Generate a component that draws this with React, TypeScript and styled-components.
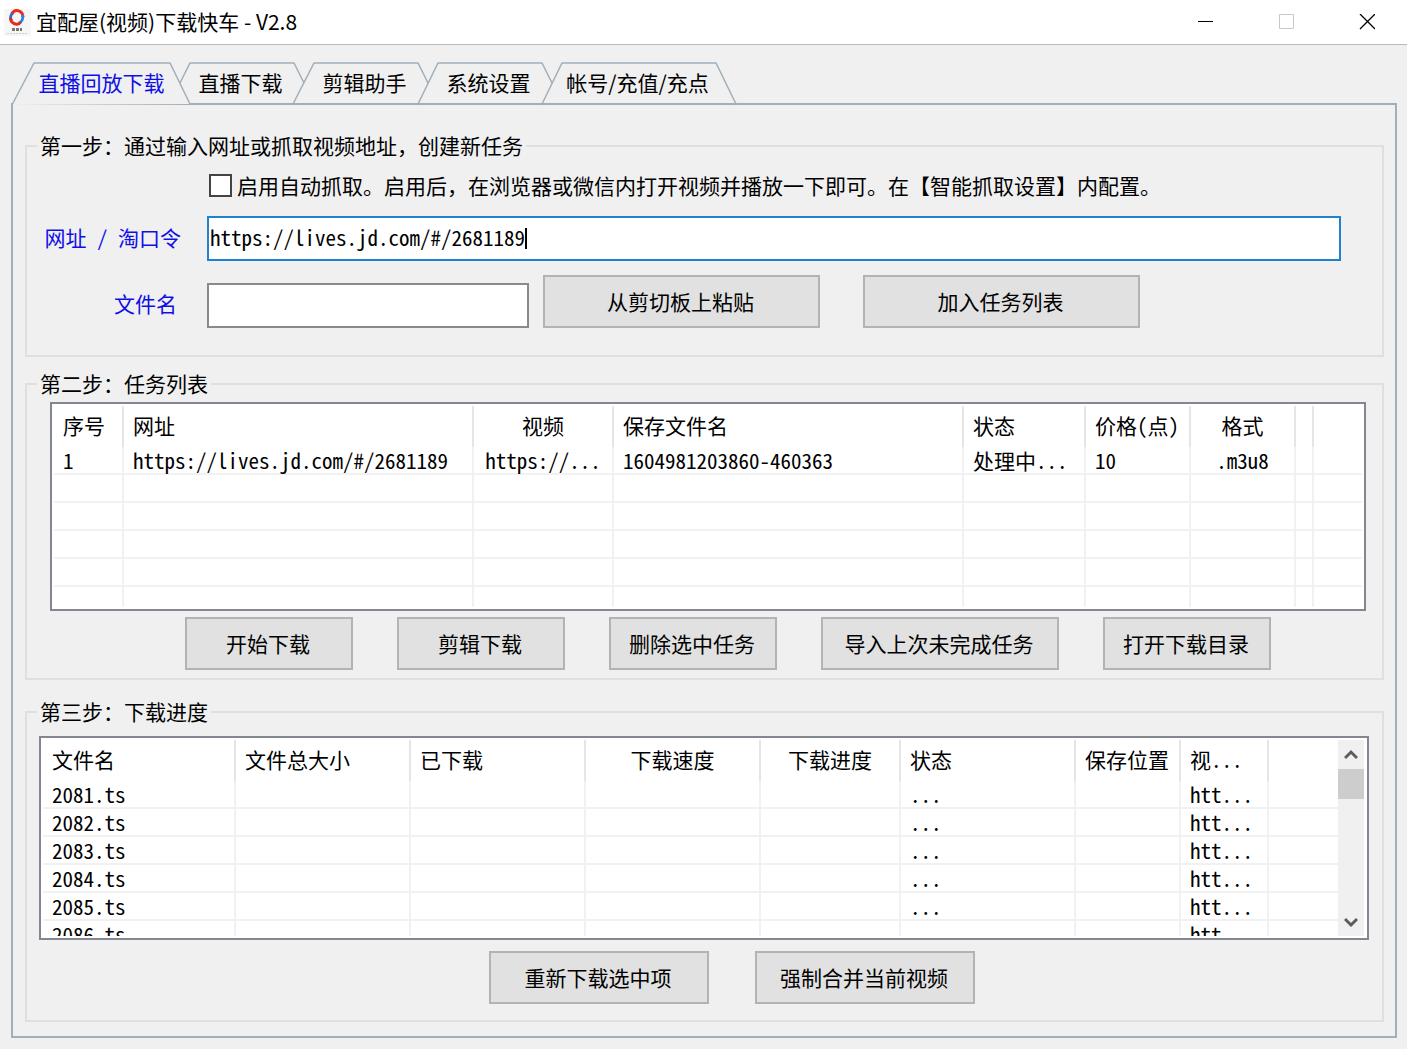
import React from "react";
import styled, { createGlobalStyle, css } from "styled-components";

const colors = {
  face: "#f0f0f0",
  panelLine: "#a0afb9",
  groupLine: "#dfdfdf",
  listLine: "#828790",
  grid: "#f1f1f1",
  headerLine: "#e5e5e5",
  blue: "#0f0fe6",
  focus: "#1f82cf",
};

const cellFont = `"Noto Sans Mono CJK SC", "Noto Sans CJK SC", "Liberation Mono", monospace`;
const uiFont = `"Noto Sans CJK SC", "Open Sans", sans-serif`;

const GlobalStyle = createGlobalStyle`
  *, *::before, *::after { box-sizing: border-box; }
  body {
    margin: 0;
    background: ${colors.face};
    color: #000;
    font: 21px/28px ${cellFont};
  }
  button, input { font: inherit; color: inherit; }
`;

const Window = styled.div`
  display: flex;
  flex-direction: column;
  min-width: 1200px;
`;

const TitleBar = styled.header`
  display: flex;
  align-items: center;
  height: 45px;
  padding-left: 4px;
  background: #fff;
  border-bottom: 1px solid #b9b9b9;
`;

const Title = styled.h1`
  flex: 1;
  margin: 0;
  padding: 0 0 3px 5px;
  font: 400 21px/28px ${uiFont};
`;

const CaptionButton = styled.button`
  display: flex;
  align-items: center;
  justify-content: center;
  width: 81px;
  height: 44px;
  padding: 0;
  border: 0;
  background: none;
`;

const Tabs = styled.nav`
  position: relative;
  display: flex;
  height: 43px;
  margin: 17px 0 -2px 11px;
`;

const Tab = styled.button<{ $width: number; $active?: boolean }>`
  position: relative;
  width: ${(p) => p.$width}px;
  padding: 0 ${(p) => (p.$active ? 0 : 3)}px 3px ${(p) => (p.$active ? 12 : 0)}px;
  border: 0;
  background: none;
  color: ${(p) => (p.$active ? colors.blue : "#000")};
  font: 400 21px/28px ${uiFont};
  white-space: nowrap;
`;

const TabShape = styled.svg`
  position: absolute;
  top: 0;
  left: 0;
  overflow: visible;
  pointer-events: none;
`;

const TabLabel = styled.span`
  position: relative;
`;

const Panel = styled.main`
  display: flex;
  flex-direction: column;
  margin: 0 10px 11px 11px;
  padding: 26px 11px 14px 12px;
  border: 2px solid ${colors.panelLine};
`;

const Group = styled.fieldset<{ $gap?: number }>`
  min-width: 0;
  margin: ${(p) => p.$gap ?? 0}px 0 0;
  padding: 0;
  border: 2px solid ${colors.groupLine};
`;

const Legend = styled.legend`
  height: 30px;
  margin-left: 10px;
  padding: 0 3px;
  line-height: 28px;
`;

const GroupBody = styled.div<{ $padding: string; $gap: number }>`
  display: flex;
  flex-direction: column;
  gap: ${(p) => p.$gap}px;
  padding: ${(p) => p.$padding};
`;

const FormGrid = styled.div`
  display: grid;
  grid-template-columns: 154px 1fr;
  column-gap: 26px;
  row-gap: 14px;
  padding: 9px 41px 27px 0;
`;

const FieldLabel = styled.label<{ $low?: boolean }>`
  align-self: center;
  padding: ${(p) => (p.$low ? "3px 4px 0 0" : "0 0 4px")};
  text-align: right;
  color: ${colors.blue};
`;

const CheckLine = styled.label`
  grid-column: 2;
  display: flex;
  align-items: center;
  gap: 5px;
  height: 32px;
  padding-left: 2px;
  white-space: nowrap;
`;

const CheckText = styled.span`
  padding-bottom: 3px;
`;

const Checkbox = styled.input`
  appearance: none;
  width: 23px;
  height: 23px;
  margin: 0 0 1px;
  border: 2px solid #444;
  background: #fff;
`;

const UrlBox = styled.div`
  position: relative;
`;

const textBox = css`
  display: block;
  height: 45px;
  padding: 0 1px 4px;
  border-radius: 0;
  background: #fff;
  outline: 0;
`;

const UrlInput = styled.input`
  ${textBox}
  width: 100%;
  border: 2px solid ${colors.focus};
`;

const NameInput = styled.input`
  ${textBox}
  width: 322px;
  margin-right: 14px;
  border: 2px solid #8a8a8a;
`;

const Caret = styled.i`
  position: absolute;
  top: 12px;
  left: 318px;
  width: 2px;
  height: 21px;
  background: #000;
`;

const FileRow = styled.div`
  display: flex;
  align-items: flex-end;
`;

const ButtonRow = styled.div<{ $shift: number; $gap: number }>`
  display: flex;
  justify-content: center;
  gap: ${(p) => p.$gap}px;
  padding-left: ${(p) => p.$shift}px;
`;

const PushButton = styled.button<{ $width: number }>`
  width: ${(p) => p.$width}px;
  height: 53px;
  padding: 0 2px 2px 0;
  border: 2px solid #b3b3b3;
  background: #e1e1e1;
  white-space: nowrap;
`;

const PasteButton = styled(PushButton)`
  margin-right: 43px;
`;

const ListFrame = styled.div<{ $height: number }>`
  display: flex;
  height: ${(p) => p.$height}px;
  padding: 2px;
  border: 2px solid ${colors.listLine};
  background: #fff;
`;

const Viewport = styled.div`
  flex: 1;
  min-width: 0;
  overflow: hidden;
`;

const Table = styled.table`
  width: 100%;
  table-layout: fixed;
  border-collapse: separate;
  border-spacing: 0;
`;

const cell = css<{ $center?: boolean }>`
  padding: 0 0 0 ${(p) => (p.$center ? 0 : 9)}px;
  border-right: 2px solid ${colors.grid};
  text-align: ${(p) => (p.$center ? "center" : "left")};
  font-weight: 400;
  white-space: nowrap;
  &:last-child { border-right: 0; }
`;

const HeadCell = styled.th<{ $center?: boolean }>`
  ${cell}
  height: 41px;
  padding-bottom: 4px;
  border-right-color: ${colors.headerLine};
`;

const Cell = styled.td<{ $center?: boolean }>`
  ${cell}
  height: 28px;
  border-bottom: 2px solid ${colors.grid};
  line-height: 26px;
`;

const ScrollBar = styled.div`
  display: flex;
  flex-direction: column;
  width: 27px;
  padding-right: 1px;
  background: #f0f0f0;
  background-clip: content-box;
`;

const ScrollArrow = styled.button`
  display: flex;
  align-items: center;
  justify-content: center;
  height: 29px;
  padding: 0;
  border: 0;
  background: none;
`;

const ScrollTrack = styled.div`
  flex: 1;
`;

const ScrollThumb = styled.div`
  height: 30px;
  background: #cdcdcd;
`;

type Column = { title: string; width?: number; center?: boolean };

const taskColumns: Column[] = [
  { title: "序号", width: 70 },
  { title: "网址", width: 350 },
  { title: "视频", width: 140, center: true },
  { title: "保存文件名", width: 350 },
  { title: "状态", width: 122 },
  { title: "价格(点)", width: 105 },
  { title: "格式", width: 105, center: true },
  { title: "", width: 18 },
  { title: "" },
];

const emptyTask = taskColumns.map(() => "");
const taskRows = [
  ["1", "https://lives.jd.com/#/2681189", "https://...", "1604981203860-460363", "处理中...", "10", ".m3u8", "", ""],
  emptyTask,
  emptyTask,
  emptyTask,
  emptyTask,
  emptyTask,
];

const progressColumns: Column[] = [
  { title: "文件名", width: 193 },
  { title: "文件总大小", width: 175 },
  { title: "已下载", width: 175 },
  { title: "下载速度", width: 175, center: true },
  { title: "下载进度", width: 140, center: true },
  { title: "状态", width: 175 },
  { title: "保存位置", width: 105 },
  { title: "视...", width: 88 },
  { title: "" },
];

const progressRows = [2081, 2082, 2083, 2084, 2085, 2086].map((n) => [
  `${n}.ts`, "", "", "", "", "...", "", "htt...", "",
]);

function ListTable({ columns, rows }: { columns: Column[]; rows: string[][] }) {
  return (
    <Viewport>
      <Table>
        <colgroup>
          {columns.map((c, i) => (
            <col key={i} width={c.width} />
          ))}
        </colgroup>
        <thead>
          <tr>
            {columns.map((c, i) => (
              <HeadCell key={i} $center={c.center}>{c.title}</HeadCell>
            ))}
          </tr>
        </thead>
        <tbody>
          {rows.map((row, r) => (
            <tr key={r}>
              {row.map((value, i) => (
                <Cell key={i} $center={columns[i].center}>{value}</Cell>
              ))}
            </tr>
          ))}
        </tbody>
      </Table>
    </Viewport>
  );
}

const tabs = [
  { label: "直播回放下载", width: 169, path: "M1 43L23 1H159L179 42" },
  { label: "直播下载", width: 124, path: "M0 21L10 1H114L124 21" },
  { label: "剪辑助手", width: 124, path: "M-11 42L10 1H114L124 21" },
  { label: "系统设置", width: 124, path: "M-10 42L10 1H114L124 21" },
  { label: "帐号/充值/充点", width: 174, path: "M-10 42L10 1H164L184 42" },
];

function AppLogo() {
  return (
    <svg width="27" height="27" viewBox="0 0 27 27" aria-hidden="true">
      <rect width="27" height="27" fill="#f6f6f6" />
      <g fill="none" strokeWidth="3">
        <path d="M7.500 12A6 6.500 0 0 1 9 3.500" stroke="#2f6fd0" />
        <path d="M8 4.500A6 6.500 0 0 1 19 8" stroke="#ee2b1c" />
        <path d="M18.500 6A6 6.500 0 0 1 15 14" stroke="#2a83dc" />
        <path d="M16.500 13.500A6 6.500 0 0 1 6.500 9" stroke="#e8281c" />
      </g>
      <path d="M8 20.500h10" stroke="#777" strokeWidth="3" strokeDasharray="3 1" />
      <path d="M3 24.500h21" stroke="#cfcfcf" strokeDasharray="2 1" />
    </svg>
  );
}

function Chevron({ down }: { down?: boolean }) {
  return (
    <svg width="14" height="12" viewBox="0 0 14 12" aria-hidden="true">
      <path d={down ? "M1 3L7 9L13 3" : "M1 9L7 3L13 9"} fill="none" stroke="#5c5c5c" strokeWidth="3" />
    </svg>
  );
}

export default function App() {
  return (
    <Window>
      <GlobalStyle />
      <TitleBar>
        <AppLogo />
        <Title>宜配屋(视频)下载快车 - V2.8</Title>
        <CaptionButton aria-label="最小化">
          <svg width="16" height="16"><path d="M1 7.500H16" stroke="#000" /></svg>
        </CaptionButton>
        <CaptionButton aria-label="最大化" disabled>
          <svg width="16" height="16"><path d="M1.500.5H15.500V14.500H1.500Z" fill="none" stroke="#c8c8c8" /></svg>
        </CaptionButton>
        <CaptionButton aria-label="关闭">
          <svg width="16" height="16"><path d="M1 0L16 15M16 0L1 15" stroke="#000" strokeWidth="1.300" /></svg>
        </CaptionButton>
      </TitleBar>

      <Tabs>
        {tabs.map((t, i) => (
          <Tab key={t.label} $width={t.width} $active={i === 0}>
            <TabShape width={t.width} height="43">
              <path d={t.path} fill={i === 0 ? colors.face : "none"} stroke={colors.panelLine} strokeWidth="1.500" />
            </TabShape>
            <TabLabel>{t.label}</TabLabel>
          </Tab>
        ))}
      </Tabs>

      <Panel>
        <Group>
          <Legend>第一步：通过输入网址或抓取视频地址，创建新任务</Legend>
          <FormGrid>
            <CheckLine>
              <Checkbox type="checkbox" />
              <CheckText>启用自动抓取。启用后，在浏览器或微信内打开视频并播放一下即可。在【智能抓取设置】内配置。</CheckText>
            </CheckLine>
            <FieldLabel htmlFor="url">网址 / 淘口令</FieldLabel>
            <UrlBox>
              <UrlInput id="url" type="text" defaultValue="https://lives.jd.com/#/2681189" />
              <Caret />
            </UrlBox>
            <FieldLabel htmlFor="name" $low>文件名</FieldLabel>
            <FileRow>
              <NameInput id="name" type="text" />
              <PasteButton $width={277}>从剪切板上粘贴</PasteButton>
              <PushButton $width={277}>加入任务列表</PushButton>
            </FileRow>
          </FormGrid>
        </Group>

        <Group $gap={12}>
          <Legend>第二步：任务列表</Legend>
          <GroupBody $padding="3px 16px 8px 23px" $gap={6}>
            <ListFrame $height={209}>
              <ListTable columns={taskColumns} rows={taskRows} />
            </ListFrame>
            <ButtonRow $shift={40} $gap={44}>
              <PushButton $width={168}>开始下载</PushButton>
              <PushButton $width={168}>剪辑下载</PushButton>
              <PushButton $width={168}>删除选中任务</PushButton>
              <PushButton $width={238}>导入上次未完成任务</PushButton>
              <PushButton $width={168}>打开下载目录</PushButton>
            </ButtonRow>
          </GroupBody>
        </Group>

        <Group $gap={17}>
          <Legend>第三步：下载进度</Legend>
          <GroupBody $padding="9px 13px 16px 12px" $gap={11}>
            <ListFrame $height={204}>
              <ListTable columns={progressColumns} rows={progressRows} />
              <ScrollBar>
                <ScrollArrow aria-label="向上滚动"><Chevron /></ScrollArrow>
                <ScrollTrack><ScrollThumb /></ScrollTrack>
                <ScrollArrow aria-label="向下滚动"><Chevron down /></ScrollArrow>
              </ScrollBar>
            </ListFrame>
            <ButtonRow $shift={56} $gap={46}>
              <PushButton $width={220}>重新下载选中项</PushButton>
              <PushButton $width={220}>强制合并当前视频</PushButton>
            </ButtonRow>
          </GroupBody>
        </Group>
      </Panel>
    </Window>
  );
}
